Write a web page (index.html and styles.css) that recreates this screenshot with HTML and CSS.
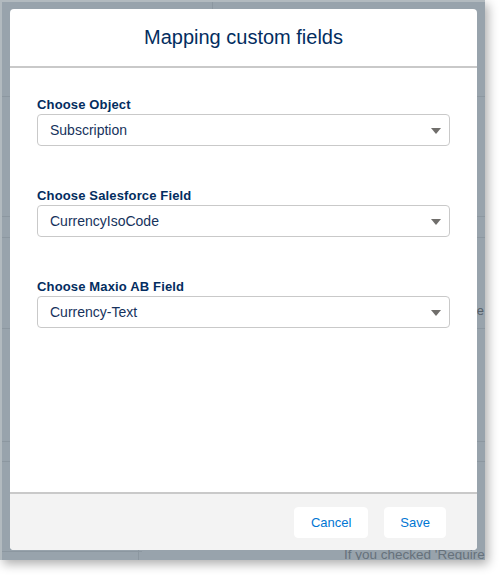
FILE: index.html
```
<!DOCTYPE html>
<html>
<head>
<meta charset="utf-8">
<title>Mapping custom fields</title>
<link rel="stylesheet" href="styles.css">
</head>
<body>
<div class="window">
  <div class="page-behind">
    <span class="hline l1"></span>
    <span class="hline l2"></span>
    <span class="hline l3"></span>
    <span class="hline l4"></span>
    <span class="hline l5"></span>
    <span class="hline l6"></span>
    <span class="hline l7"></span>
    <span class="vline v1"></span>
    <span class="vline v2"></span>
    <span class="behind-text side">Fie</span>
    <span class="behind-text bottom">If you checked 'Require</span>
  </div>
  <div class="modal">
    <header class="modal-header">
      <h2 class="modal-title">Mapping custom fields</h2>
    </header>
    <div class="modal-body">
      <div class="field">
        <label class="field-label">Choose Object</label>
        <div class="select">
          <span class="select-value">Subscription</span>
          <span class="caret"></span>
        </div>
      </div>
      <div class="field">
        <label class="field-label">Choose Salesforce Field</label>
        <div class="select">
          <span class="select-value">CurrencyIsoCode</span>
          <span class="caret"></span>
        </div>
      </div>
      <div class="field">
        <label class="field-label">Choose Maxio AB Field</label>
        <div class="select">
          <span class="select-value">Currency-Text</span>
          <span class="caret"></span>
        </div>
      </div>
    </div>
    <footer class="modal-footer">
      <button class="btn">Cancel</button>
      <button class="btn btn-save">Save</button>
    </footer>
  </div>
</div>
</body>
</html>
```
FILE: styles.css
```
* { box-sizing: border-box; }
html, body {
  margin: 0;
  padding: 0;
  background: #ffffff;
  font-family: "Liberation Sans", Arial, sans-serif;
}
body {
  width: 501px;
  height: 575px;
  overflow: hidden;
}
.window {
  position: relative;
  width: 485px;
  height: 560px;
  background: #98a3ac;
  border-top: 2px solid #b2babf;
  border-left: 2px solid #b2babf;
  padding: 7px 0 0 8px;
  box-shadow: 3px 4px 10px rgba(0, 0, 0, 0.32);
  overflow: hidden;
}
.page-behind {
  position: absolute;
  inset: 0;
}
.hline {
  position: absolute;
  left: 0;
  right: 0;
  height: 1px;
  background: #8c97a0;
}
.l1 { top: 94px; }
.l2 { top: 214px; }
.l3 { top: 235px; }
.l4 { top: 326px; }
.l5 { top: 439px; }
.l6 { top: 459px; }
.l7 { top: 549px; left: 0; right: auto; width: 140px; }
.vline {
  position: absolute;
  width: 1px;
  background: #8c97a0;
}
.v1 { left: 210px; top: 0; height: 20px; }
.v2 { left: 136px; top: 540px; height: 30px; }
.behind-text {
  position: absolute;
  white-space: nowrap;
  font-size: 13px;
  color: #66717b;
}
.behind-text.side { left: 464px; top: 301px; color: #56606a; }
.behind-text.bottom { left: 342px; top: 545px; font-size: 13.5px; }
.modal {
  position: relative;
  z-index: 1;
  width: 467px;
  height: 541px;
  background: #ffffff;
  border-radius: 4px;
  display: flex;
  flex-direction: column;
  overflow: hidden;
}
.modal-header {
  height: 59px;
  border-bottom: 2px solid #c9c9c9;
  display: flex;
  align-items: center;
  justify-content: center;
}
.modal-title {
  margin: 0;
  font-size: 20px;
  font-weight: normal;
  color: #032d60;
  line-height: 24px;
  padding-bottom: 2px;
}
.modal-body {
  flex: 1;
  padding: 27px 27px 0 27px;
  display: flex;
  flex-direction: column;
  gap: 40px;
}
.field-label {
  display: block;
  font-size: 13px;
  font-weight: bold;
  color: #032d60;
  line-height: 19px;
  letter-spacing: 0.15px;
}
.select {
  height: 32px;
  border: 1px solid #c9c9c9;
  border-radius: 4px;
  display: flex;
  align-items: center;
  justify-content: space-between;
  padding: 0 8px 0 12px;
}
.select-value {
  font-size: 14px;
  color: #16325c;
}
.caret {
  width: 0;
  height: 0;
  border-left: 5.5px solid transparent;
  border-right: 5.5px solid transparent;
  border-top: 6px solid #706e6b;
  margin-top: 1px;
}
.modal-footer {
  height: 58px;
  background: #f3f3f3;
  border-top: 2px solid #c9c9c9;
  display: flex;
  align-items: center;
  justify-content: flex-end;
  gap: 16px;
  padding: 0 31px 0 0;
}
.btn {
  height: 31px;
  padding: 0 16px;
  border: 1px solid #ffffff;
  border-radius: 4px;
  background: #ffffff;
  color: #0176d3;
  font-family: "Liberation Sans", Arial, sans-serif;
  font-size: 13px;
  line-height: 29px;
  cursor: pointer;
}
.btn-save {
  padding: 0 15px;
}
```
